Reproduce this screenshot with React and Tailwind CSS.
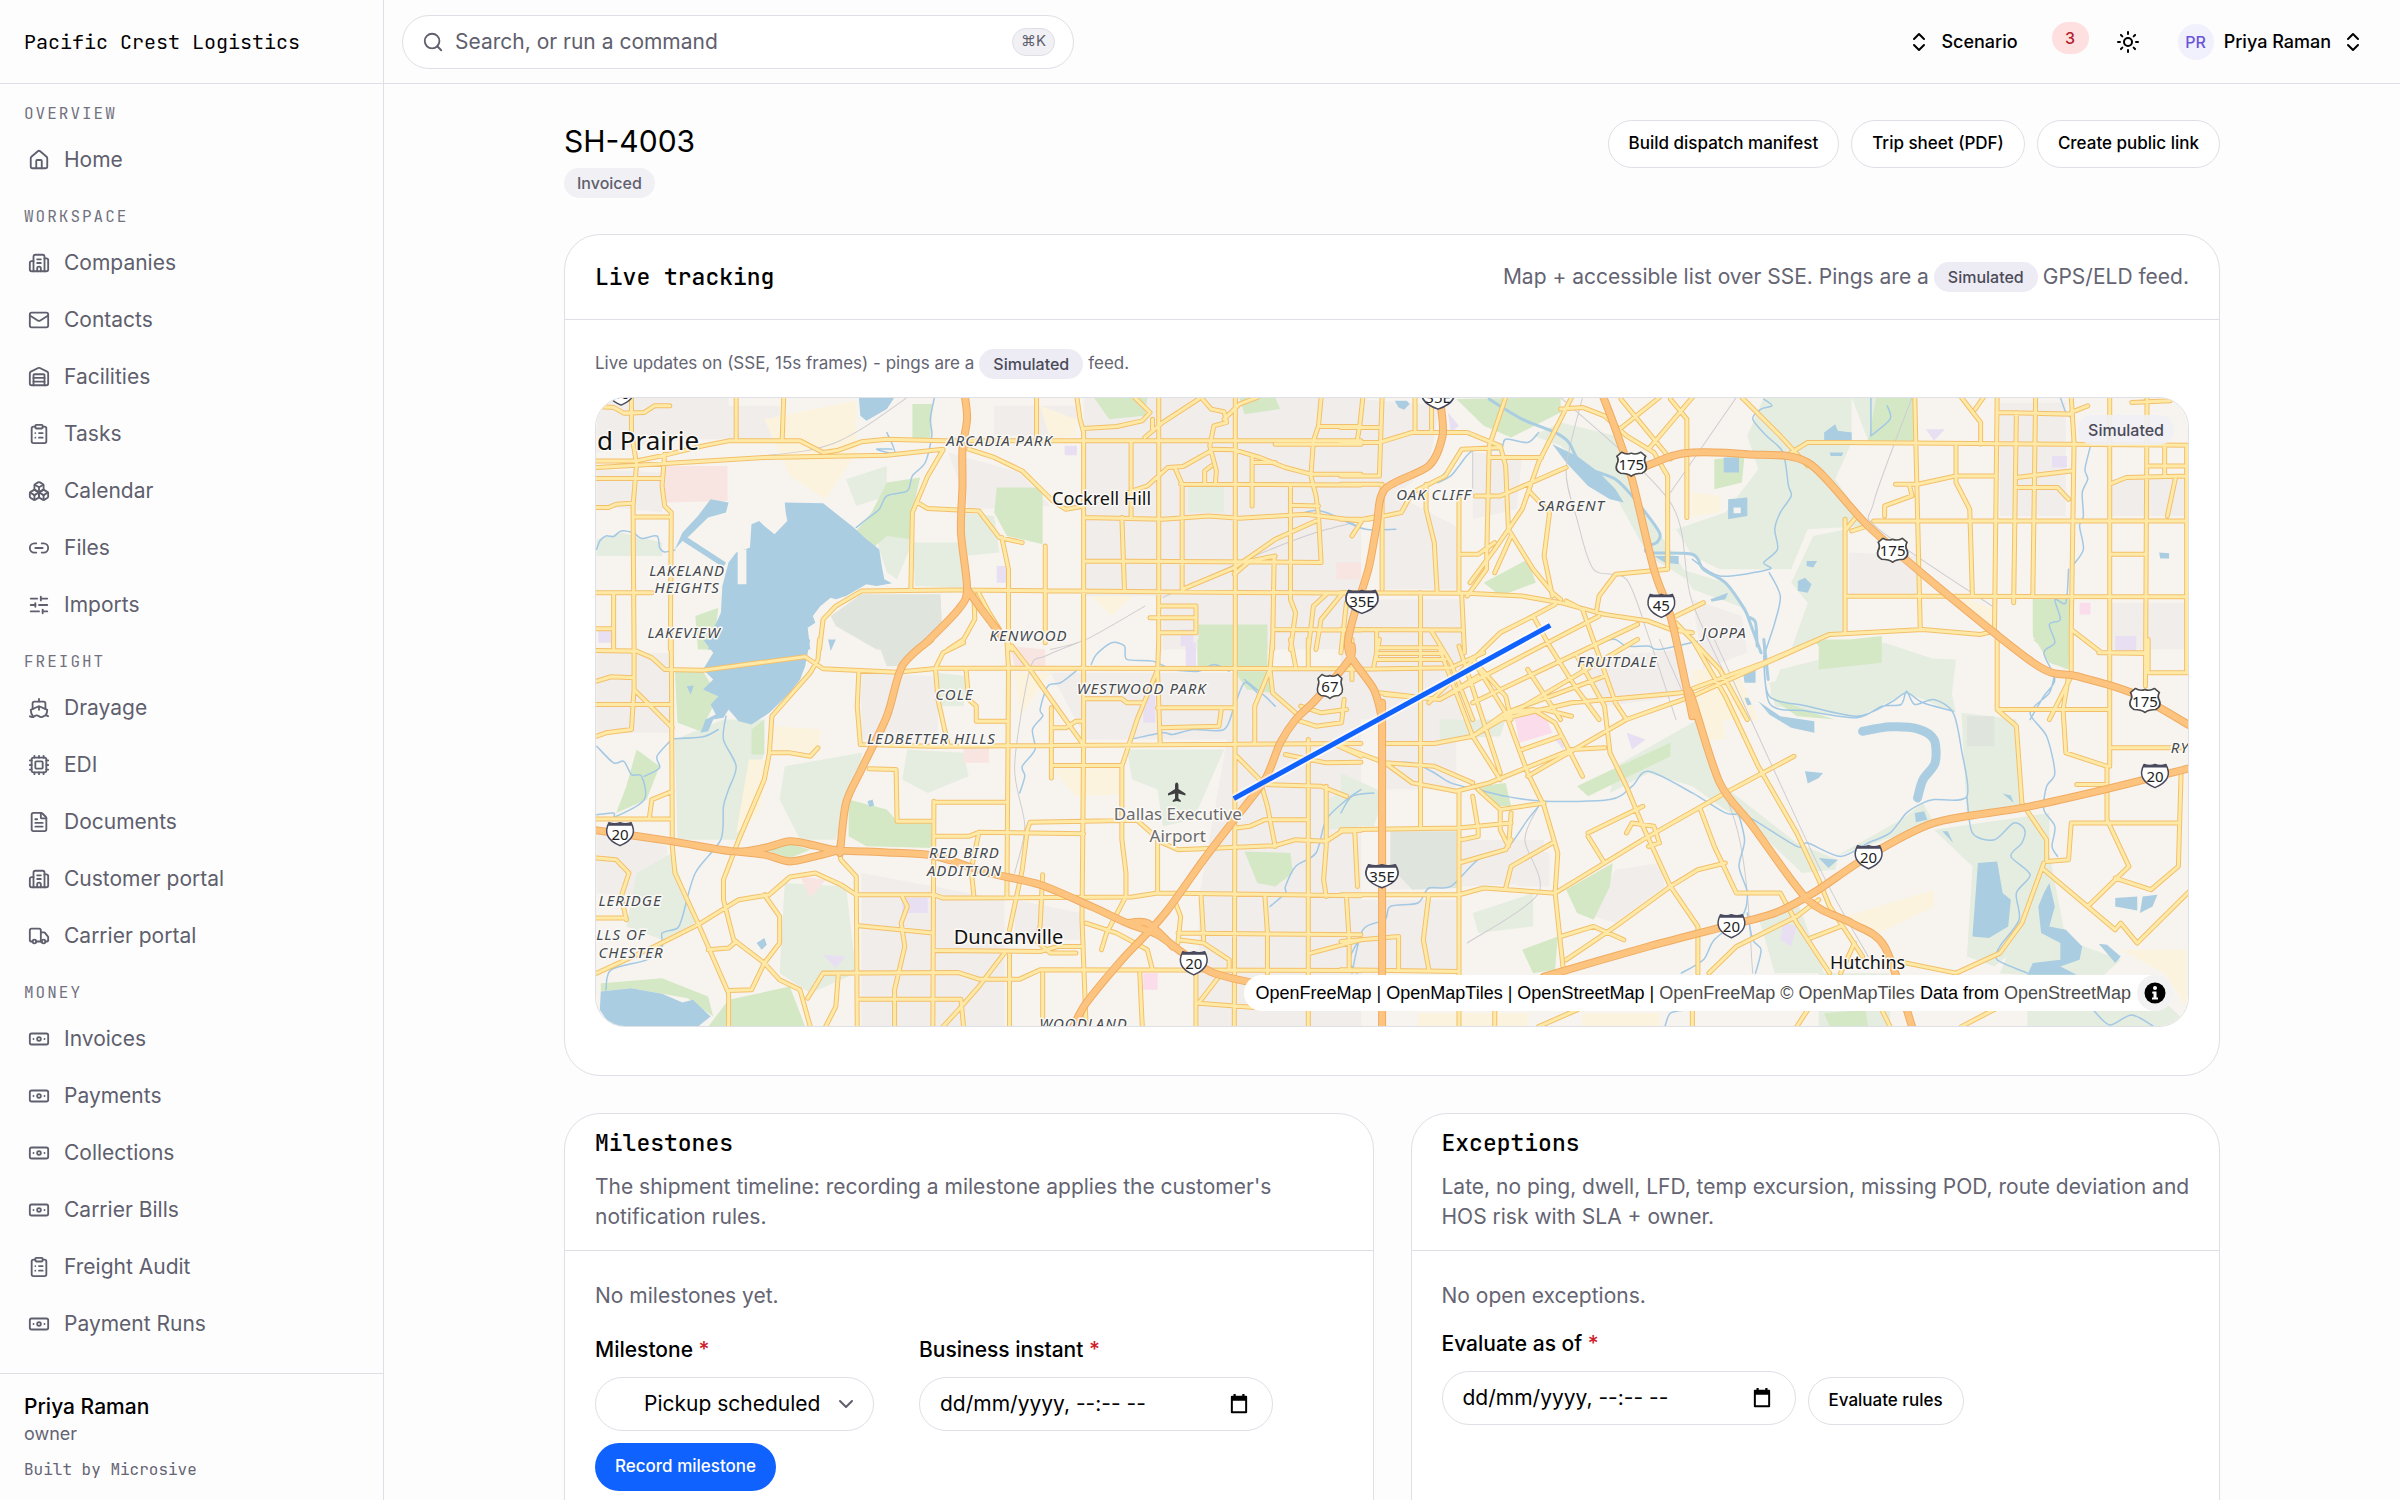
import React from "react";
import {
  House,
  Building2,
  Mail,
  Warehouse,
  ClipboardList,
  Boxes,
  Link2,
  SlidersHorizontal,
  Ship,
  Cpu,
  FileText,
  Truck,
  Banknote,
  Search,
  Sun,
  ChevronDown,
} from "lucide-react";

const NAV = [
  { title: "Overview", items: [["Home", House]] },
  {
    title: "Workspace",
    items: [
      ["Companies", Building2],
      ["Contacts", Mail],
      ["Facilities", Warehouse],
      ["Tasks", ClipboardList],
      ["Calendar", Boxes],
      ["Files", Link2],
      ["Imports", SlidersHorizontal],
    ],
  },
  {
    title: "Freight",
    items: [
      ["Drayage", Ship],
      ["EDI", Cpu],
      ["Documents", FileText],
      ["Customer portal", Building2],
      ["Carrier portal", Truck],
    ],
  },
  {
    title: "Money",
    items: [
      ["Invoices", Banknote],
      ["Payments", Banknote],
      ["Collections", Banknote],
      ["Carrier Bills", Banknote],
      ["Freight Audit", ClipboardList],
      ["Payment Runs", Banknote],
    ],
  },
];

const MONO = "font-['JetBrains_Mono','DejaVu_Sans_Mono',monospace]";

/* ---------- Map data: four tiles, each with its own grid ---------- */

const TILES = {
  nw: { ox: -36, oy: -178, sx: 0.5102, sy: 0.33333 },
  sw: { ox: -36, oy: 242, sx: 0.5102, sy: 0.33333 },
  ne: { ox: 744, oy: -28, sx: 0.54845, sy: 0.33333 },
  se: { ox: 744, oy: 242, sx: 0.54845, sy: 0.33333 },
};

const project = (tile, points) => {
  const t = TILES[tile];
  return points.split(" ").map((pair) => {
    const [x, y] = pair.split(",").map(Number);
    return [t.ox + x * t.sx, t.oy + y * t.sy];
  });
};

const at = ([x, y]) => `${x.toFixed(1)} ${y.toFixed(1)}`;

const straight = (pts) => "M" + pts.map(at).join("L");

/* Rounds every corner with a Catmull-Rom spline through the points. */
const curved = (pts) => {
  let d = "M" + at(pts[0]);
  for (let i = 0; i < pts.length - 1; i++) {
    const a = pts[i - 1] || pts[i];
    const b = pts[i];
    const c = pts[i + 1];
    const e = pts[i + 2] || c;
    d += `C${at([b[0] + (c[0] - a[0]) / 7, b[1] + (c[1] - a[1]) / 7])} ${at([c[0] - (e[0] - b[0]) / 7, c[1] - (e[1] - b[1]) / 7])} ${at(c)}`;
  }
  return d;
};

const layer = (data, draw = straight, end = "") =>
  Object.entries(data)
    .flatMap(([tile, list]) => list.map((points) => draw(project(tile, points)) + end))
    .join("");

const AREAS = [
  ["#f1edeb", {
    nw: ["72,535 330,535 330,640 72,700", "250,560 430,560 430,660 250,660", "1025,535 1568,535 1568,1290 1180,1290 1180,1130 1025,1130", "760,700 900,760 960,860 800,870", "72,750 200,760 200,880 72,860", "850,560 1010,560 1010,650 850,650"],
    sw: ["590,100 740,110 740,300 590,300", "960,100 1320,100 1320,300 1030,300", "590,700 870,780 870,1160 590,1160", "1330,90 1568,90 1568,1160 1250,1160 1250,780", "72,40 215,40 215,280 72,280", "890,780 1020,820 1020,900 890,900", "72,560 210,620 210,780 72,760"],
    ne: ["0,85 180,110 160,290 60,440 0,440", "80,360 220,480 210,660 80,660", "0,690 220,690 220,1050 0,1050", "1200,100 1320,100 1320,440 1200,440", "1400,330 1540,330 1540,440 1400,440", "925,550 1050,560 1050,680 925,680", "640,690 730,740 740,850 660,900", "240,250 330,260 320,420 240,450", "1400,700 1540,700 1540,840 1400,840"],
    se: ["80,90 210,90 210,450 80,450", "500,690 580,670 590,740 500,850 460,830", "90,600 370,600 370,730 90,750", "0,780 210,780 210,990 0,990", "430,60 620,30 620,170 480,200", "320,620 380,640 380,740 320,740"],
  }],
  ["#e5ede0", {
    nw: ["690,970 780,970 790,1105 695,1100", "560,780 640,740 640,830 580,860", "610,880 680,860 690,970 660,1080 640,1060 625,990", "1230,800 1300,800 1300,880 1230,880", "780,880 850,890 860,1000 790,1010", "72,960 120,940 200,970 200,1010 72,1010"],
    sw: ["225,300 320,240 400,240 400,340 350,600 230,600", "440,380 590,340 590,390 560,490 540,600 470,600 430,480", "440,730 560,740 580,1000 490,1060 430,1000", "680,330 790,340 800,410 720,460 670,420", "1110,330 1300,330 1240,540 1180,560 1170,450 1120,420", "150,700 220,640 265,850 200,900 130,860", "740,100 800,110 790,200 745,200", "1500,480 1568,440 1568,560 1500,570"],
    ne: ["770,85 930,85 930,220 900,330 960,470 850,480 820,600 690,600 640,560 610,480 700,430 760,300 740,200", "860,500 920,480 915,790 820,840 850,700 820,640", "800,900 990,820 1100,880 1120,1030 1030,970 940,1040 780,980", "500,200 540,400 600,540 640,640 560,560 500,380 400,230 350,200 400,160", "620,600 700,640 740,720 640,660", "1260,680 1330,680 1330,780 1260,780", "930,85 1050,85 1050,215 960,215"],
    se: ["780,130 985,50 1120,60 1110,200 1030,160 940,235 790,200", "500,380 650,240 690,430 830,610 905,660 900,690 840,700 750,560 690,500 640,440 560,400 490,460", "1130,220 1230,240 1240,500 1140,530", "1080,570 1290,520 1290,640 1250,900 1190,980 1140,950 1150,680", "240,820 350,760 350,860 250,880", "900,650 1080,550 1060,490 1020,540", "1290,640 1320,900 1420,960 1380,1020 1200,1000", "870,1000 1000,1000 1000,1160 870,1160", "1250,1010 1450,1010 1548,1160 1250,1160", "0,400 80,460 60,560 0,560", "760,830 830,780 880,1000 790,1000", "180,240 300,240 290,290 180,300"],
  }],
  ["#d5e8c6", {
    nw: ["690,555 730,555 725,655 690,660", "855,805 945,805 945,975 875,950 850,880", "640,790 705,775 690,880 685,960 640,950 610,990 580,935 610,880", "1045,535 1150,535 1145,590 1075,600", "1330,535 1400,535 1410,570 1340,585", "1250,1215 1385,1215 1385,1290 1250,1290", "265,1190 310,1165 300,1290 270,1290"],
    sw: ["225,95 280,95 310,170 275,275 230,250", "565,480 640,510 660,545 727,550 727,625 600,620 565,590", "400,630 450,612 490,630 450,655", "1340,635 1430,640 1435,700 1400,740 1365,730", "150,330 195,380 170,480 110,520 130,440", "1248,0 1385,0 1385,80 1248,80", "80,1030 200,1015 290,1070 300,1130 250,1075 140,1045 80,1055", "330,1080 450,1040 480,1160 290,1160", "375,270 400,240 400,345 375,345", "1320,95 1390,95 1390,160 1345,150"],
    ne: ["210,90 400,85 400,130 310,205 260,170", "975,85 1045,85 1050,215 960,215", "260,640 340,570 355,640 290,680", "1260,690 1330,690 1325,900 1290,880 1260,800", "870,820 985,800 985,880 870,900", "680,270 735,260 730,340 680,360"],
    se: ["480,400 600,310 600,350 450,470 430,440", "410,750 495,670 490,740 460,840 430,820", "250,440 300,430 310,500 280,500", "330,930 395,890 390,990 350,1000", "1260,0 1330,0 1320,90", "860,0 985,0 960,60 900,80", "880,1120 955,1110 960,1160 890,1160", "780,170 860,220 900,240 830,230"],
  }],
  ["#dfe4dd", {
    nw: ["590,1125 745,1125 748,1220 690,1290 620,1290 540,1220 530,1190"],
    sw: ["620,0 720,0 665,80 640,80"],
    se: ["90,575 210,575 210,745 130,750 90,680", "1140,230 1190,230 1190,320 1140,320"],
  }],
  ["#fbf3dd", {
    nw: ["400,600 580,545 580,700 520,840 450,770", "940,560 1010,600 1010,650 960,660", "1040,1130 1120,1130 1080,1190"],
    sw: ["370,360 410,360 390,520 345,580", "420,260 510,270 505,340 420,330", "965,390 1095,385 1095,465 1010,470", "890,100 960,100 900,230"],
    ne: ["1110,670 1190,720 1190,780", "640,370 690,380 690,430 640,440", "640,900 720,900 760,1050 650,1050"],
    se: ["920,830 1080,750 1080,800 980,880", "1420,930 1540,930 1540,1100 1500,1000", "140,1120 340,1120 340,1160 140,1160", "440,1120 580,1120 580,1160 440,1160", "640,180 690,170 700,300 660,300"],
  }],
  ["#f8e4e1", {
    nw: ["205,740 328,740 328,845 205,850", "1520,1030 1568,1030 1568,1080 1520,1080"],
    sw: ["470,710 520,720 490,775", "790,320 840,320 840,370 790,370", "880,20 950,30 950,80 890,80"],
  }],
  ["#e8dff3", {
    nw: ["988,680 1012,680 1012,708 988,708", "855,1040 875,1040 875,1090 855,1090", "75,1235 100,1235 100,1270 75,1270", "1215,1230 1240,1230 1240,1280 1215,1280"],
    sw: ["670,775 720,775 720,820 670,820", "1142,165 1165,165 1165,250 1142,250", "515,945 560,950 540,985", "1225,10 1245,10 1245,80 1225,80"],
    ne: ["1295,260 1322,260 1322,295 1295,295", "1410,800 1448,800 1448,845 1410,845", "1065,180 1100,180 1080,215", "195,130 215,170 200,190"],
    se: ["805,850 830,860 820,920 800,900", "520,280 555,300 530,330", "385,290 410,300 405,330"],
  }],
  ["#fadcea", {
    sw: ["1142,1000 1170,1000 1170,1050 1142,1050"],
    se: ["315,225 370,220 385,280 325,310"],
    ne: ["1345,700 1365,700 1365,735 1345,735"],
  }],
  ["#aacde1", {
    nw: [
      "440,850 515,852 575,925 600,960 625,990 630,1040 635,1080 650,1092 620,1100 600,1095 560,1130 540,1140 530,1135 510,1160 495,1190 500,1210 485,1225 490,1290 290,1290 300,1230 315,1180 318,1100 330,1030 345,1000 372,985 375,915 390,905 400,920 420,945 445,905 442,880",
      "295,840 330,850 325,880 290,895 250,955 325,1030 320,1045 240,965 225,990 240,940 270,890",
      "585,535 655,535 640,570 600,605 588,590",
    ],
    sw: [
      "280,0 490,0 480,80 470,120 450,160 410,220 375,255 350,245 330,210 320,235 300,240 290,275 275,280 285,240 305,225 295,195 310,170 280,150 300,120 280,90 300,40",
      "80,1055 140,1045 200,1062 240,1088 260,1080 295,1130 270,1160 100,1160 78,1110",
      "385,910 400,895 405,915 395,930",
      "602,485 612,480 615,498 606,502",
      "525,0 540,0 530,35",
      "248,140 262,138 256,165",
    ],
    ne: [
      "385,225 430,260 470,310 500,360 515,400 490,390 450,350 410,280",
      "880,190 900,165 905,185 930,190 930,213 880,213",
      "697,265 725,265 725,310 697,310",
      "705,390 740,385 740,440 705,450",
      "570,560 615,560 615,585 590,580",
      "832,635 845,625 857,645 850,670 832,665",
      "735,900 755,900 755,940 735,940",
      "848,575 867,575 860,595 848,590",
      "673,690 705,670 700,690 675,697",
      "1490,550 1508,552 1508,568 1492,568",
      "98,95 120,95 125,105 115,122 105,115",
      "890,250 915,250 912,260 892,260",
    ],
    se: [
      "1160,670 1195,665 1205,760 1220,780 1215,860 1180,895 1150,890",
      "1290,730 1300,800 1290,860 1320,870 1350,920 1345,960 1310,980 1340,1005 1250,1005 1260,970 1310,960 1310,910 1275,880 1270,800 1280,760",
      "760,185 800,230 862,245 862,280 820,265 780,225",
      "845,395 878,400 870,415 850,432",
      "870,655 905,660 888,685",
      "1410,775 1450,770 1450,812 1410,800",
      "1460,770 1487,765 1478,800 1455,820",
      "1380,912 1395,915 1420,950 1410,970",
      "1045,520 1062,515 1068,540 1047,548",
      "732,95 755,95 755,130 735,130",
      "1095,575 1105,575 1115,610",
      "1205,462 1220,468 1225,490",
      "735,175 742,175 748,195 740,197",
    ],
  }],
  ["#f7f4ef", { nw: ["348,995 365,990 365,1095 348,1095"], ne: ["715,415 728,415 728,432 715,432"] }],
];

const STREAMS = {
  nw: [
    "733,535 725,600 728,650 715,730 690,770 680,815 640,830 625,870 600,900 580,925",
    "72,990 78,965 90,950 105,952 120,935 145,942 160,958 190,950 195,985 205,998 225,992",
    "640,640 655,700 620,690 650,690",
    "1430,895 1470,875 1500,880 1568,925",
  ],
  sw: [
    "325,230 320,300 345,380 330,450 320,500 315,600 265,700 240,830 230,865 200,880 200,920 170,960 100,990 90,1050",
    "72,525 105,520 110,530 165,480 160,410 140,405 125,365 105,370 72,320",
    "220,298 280,292 310,270", "220,298 190,350 195,385 165,410",
    "1010,95 980,130 955,140 940,210 945,230 925,270 930,330 905,380 910,410 900,460",
    "1120,298 1180,280 1200,285 1240,270 1300,270 1320,200 1340,130 1365,160",
    "1040,75 1050,45 1080,10 1105,20 1110,60 1160,65 1200,90 1250,95 1280,75 1310,95",
    "1568,450 1540,480 1500,540 1480,640 1440,680 1420,740 1420,760 1390,800",
    "1568,890 1545,960 1560,1000", "1340,120 1380,170 1400,200",
  ],
  ne: [
    "770,90 785,110 765,120 750,150 775,200 805,250 815,350 820,380 800,430 790,480 795,540 770,580 780,600 690,620 640,570",
    "780,610 800,680 790,760 770,860",
    "1310,85 1320,130 1330,150 1335,230", "1365,230 1355,300 1360,330 1350,370 1352,440 1345,470 1352,540 1332,590",
    "1325,600 1320,700 1300,690 1310,750 1290,765 1300,820 1280,850 1300,930 1280,980 1255,1050",
    "480,815 500,810 520,830 560,830 580,840 650,815",
    "770,860 780,980 850,1010 940,1040 1000,1000 1030,970 1060,1000 1115,1025",
    "965,200 965,85", "965,200 1000,150 995,110", "360,190 340,220 300,210 290,240 240,245 215,290 200,320 175,340 190,310",
    "0,450 45,480 100,480",
  ],
  se: [
    "770,0 780,190 850,215 940,235 985,200 1020,195 1030,155 1045,195 1080,180 1115,220 1130,330 1140,470 1080,480 1060,490 1030,520 1000,580 960,610 910,650 850,610 830,620 740,530 700,520 640,460 560,395 530,440 490,480 370,485 300,470 250,450 200,430 165,395 130,370 90,370",
    "1140,470 1150,580 1190,600 1225,550 1245,570 1240,610 1220,650 1255,705 1230,760 1235,840 1200,920 1195,960 1250,1000",
    "1300,100 1290,160 1255,220 1285,290 1300,400 1285,440 1280,510 1300,560 1295,620 1305,650",
    "0,520 20,470 60,460", "360,500 340,540 300,630 250,660 200,740 160,745 140,790 90,800 80,840 40,870 20,1000",
    "720,500 735,600 725,680 740,760 730,830 680,900 660,960 620,1000", "740,820 750,900 765,930 755,1000",
    "590,1160 600,1120 630,1110", "1370,1110 1400,1155 1440,1125 1480,1160",
  ],
};

const RIVERS = {
  ne: ["270,90 330,150 390,190 415,220 440,290 500,330 540,400 580,490 575,520 560,530 560,550 640,555 660,600 700,640 735,720 745,760 765,850", "745,745 755,760 758,830"],
  se: ["770,0 778,120"],
};
const OXBOW = { se: ["950,275 1000,262 1050,268 1080,300 1082,370 1060,420 1050,475"] };

const RAIL = {
  nw: ["680,535 600,620 540,670 480,695 400,710", "1568,905 1480,940 1360,1010 1180,1135", "1145,1160 1030,1260 960,1290"],
  sw: ["1030,0 950,50 920,90 890,380 910,560 890,700"],
  ne: ["440,85 410,300 430,450 460,600 520,630 560,800 610,1050", "720,85 600,370", "400,85 600,400 640,700 740,1050", "1040,85 970,400 980,480 1190,715", "240,250 240,370"],
  se: ["580,0 720,560 750,1000", "680,0 870,680 960,950", "360,500 335,600 360,760 230,910"],
};

const ROADS = {
  nw: [
    "72,725 150,725 205,708 280,680 330,665 470,665 515,700 545,693 590,668 640,660 750,665 1022,665 1568,665",
    "72,745 150,738 400,715 640,708 750,690",
    "800,690 850,715 905,755 935,800 965,845 990,870 1022,862",
    "140,535 140,640 150,735 143,860 145,1290",
    "72,562 105,565 125,582 165,580 185,560 215,560",
    "345,535 345,662", "438,535 435,665", "72,778 200,778",
    "205,705 200,800 205,860 218,880 216,1290",
    "143,893 216,893", "72,865 95,865 110,855 140,852", "72,1120 180,1120", "105,1125 105,1290", "72,1228 105,1228",
    "933,535 933,650", "1012,535 1018,600 1025,640 1025,1290",
    "1025,628 1090,622 1140,605 1155,580 1125,535", "1160,600 1160,630", "1172,535 1172,1290",
    "1145,655 1180,610 1250,540",
    "1255,535 1275,570 1300,578 1305,610 1280,620 1272,680 1285,755 1283,790", "1262,790 1262,755 1275,740",
    "1322,535 1322,1290", "1300,600 1330,555 1365,535",
    "1490,535 1485,620 1475,665 1470,770 1480,830 1485,890 1490,1030",
    "1400,675 1568,675", "1485,622 1568,622",
    "1110,820 1150,800 1190,745 1220,742 1280,690 1320,692 1370,715 1420,745 1470,765 1568,765",
    "1355,710 1355,860", "1358,730 1400,730", "1205,750 1218,795 1218,1110", "1215,795 1568,797",
    "1430,797 1430,1140 1440,1180 1430,1290", "1430,858 1485,860",
    "1025,895 1180,900 1270,890 1330,897 1460,885 1568,905",
    "1118,665 1118,895", "1100,895 1105,1110", "1025,1025 1380,1028 1490,1030",
    "1320,1065 1350,1025 1400,1010", "1398,1015 1395,1290",
    "590,1115 770,1112 1568,1122", "590,1115 540,1160 515,1200 508,1290",
    "750,692 720,770 690,880 687,1112", "700,850 720,868 820,875 860,955 905,970",
    "865,955 878,1050 878,1290", "950,980 950,1270", "810,1122 812,1200 790,1260 760,1290",
    "1175,1160 1245,1160 1245,1240 1175,1240", "1155,1195 1245,1195", "1400,1230 1568,1232",
    "1500,1125 1475,1160 1465,1290", "1218,1110 1320,1045 1400,960 1480,905", "1530,1125 1490,1200 1480,1290",
    "820,1122 840,1180 885,1290",
  ],
  sw: [
    "72,33 150,35 180,55 205,90 280,92 480,52 515,88 660,98 740,86 1568,88",
    "218,0 220,620 225,700 270,850 330,1060 330,1160", "145,0 145,150 220,265",
    "72,195 218,195", "72,290 90,280 140,270 145,150", "72,125 100,112 145,115",
    "508,0 505,60 490,100 415,230 410,340 400,420 350,600 320,720 320,780 340,900 400,970 430,1020 470,1050 490,1160",
    "415,340 450,340 490,350 505,325", "72,538 220,538", "175,535 180,480 220,455",
    "585,98 582,200 588,315 730,320 1568,312", "735,86 740,180 760,318", "735,86 750,40 790,10",
    "795,90 800,180 815,200 815,245 875,245", "875,0 878,90 875,770", "885,20 920,90 980,220 1022,310",
    "1025,0 1025,310 1022,840 1030,1160", "605,388 658,390 660,545 730,545",
    "732,485 730,1160", "732,488 875,488", "732,590 800,590 820,578 1025,582",
    "915,570 920,548 1130,542 1180,610 1210,630 1400,618 1440,600 1500,605 1530,575 1568,572",
    "915,570 905,690 880,870", "820,578 805,690 810,765",
    "585,765 732,765 750,775 1120,772 1170,760 1568,768", "545,620 550,660 580,710 582,1160",
    "185,920 270,855 350,780 410,765 450,712 500,700 550,735 580,765",
    "400,765 430,830 430,910 400,970 375,1050 330,1052", "72,655 110,660 135,700 120,770 130,840", "72,1000 185,920",
    "72,835 130,835", "290,930 330,925 345,905",
    "485,1075 515,1000 780,998 820,1018 900,1018 940,990 1568,992", "585,1078 785,1078", "585,858 730,880",
    "735,932 940,935 975,920 1022,920", "870,940 820,1040 780,1110 750,1160", "880,945 880,1160",
    "670,770 680,800 668,850 675,920 655,1050 655,1160", "945,705 940,860 930,900 960,940 1010,940",
    "962,205 962,415", "962,265 990,265 1010,245 1022,245", "962,378 1100,378", "1030,178 1100,178 1110,190 1140,190",
    "1170,90 1130,240 1100,380 1100,600 1108,700 1108,770 1070,880 1060,930", "1172,0 1170,100 1175,310",
    "1170,205 1320,205", "1295,205 1290,260 1175,265", "1322,0 1320,1160",
    "1395,0 1390,90 1395,160 1440,220", "1360,310 1360,200 1390,90", "1170,600 1170,760",
    "1465,0 1465,88", "1465,300 1465,1160", "1500,440 1500,620 1495,720 1500,770", "1210,880 1568,885",
    "1205,790 1215,830 1210,910", "1385,880 1385,1000", "1255,768 1260,900", "1420,345 1500,370 1568,368",
    "1385,435 1490,440 1540,470", "1325,565 1350,560 1380,540 1465,540", "1245,1000 1245,1160",
    "1290,1010 1250,1090 1380,1105", "1135,1000 1140,1160", "945,1000 945,1160", "1430,0 1440,80",
    "1030,850 1090,880 1150,930 1160,990", "1210,900 1260,910 1310,960 1310,985", "1325,350 1370,420 1385,500 1400,620",
    "1440,240 1480,260 1530,250 1535,180", "1450,200 1490,220 1540,210", "785,1078 790,1160", "545,1000 540,1100 520,1160",
    "1470,940 1568,900", "1380,770 1385,880", "1510,310 1568,350",
  ],
  ne: [
    "0,175 70,175", "0,220 70,220 130,190 230,190 290,230 300,290", "0,320 70,320", "0,345 70,345",
    "40,85 35,160 30,210", "75,85 70,320", "135,85 135,190", "165,85 165,190",
    "300,85 270,230 265,600 230,680", "420,85 400,150 360,280 330,420 280,540 235,640", "270,265 365,265",
    "0,450 50,450 110,430 130,370 190,320 220,240 290,235", "245,380 290,380 410,295",
    "155,345 155,420 170,520 175,665", "215,385 215,670", "75,345 75,660",
    "300,290 305,480 350,600 385,670 400,690", "345,370 380,430 370,560 385,680",
    "0,670 230,672 330,680 400,700 480,735 560,755 600,780 640,790", "220,555 250,555 280,520", "280,610 310,500",
    "0,780 220,782", "160,1000 290,790 350,740 390,705", "65,785 65,870 190,870", "70,835 180,835", "70,852 185,852",
    "165,785 200,880 240,1050", "220,680 225,850", "0,900 200,895 260,850", "145,670 145,1050", "10,700 0,850",
    "400,120 440,115 480,140 520,200 570,250 595,320 595,600 500,615 470,680 465,730",
    "500,190 580,85", "510,90 570,210 600,270", "560,240 640,85", "630,150 630,445", "600,90 630,150",
    "730,85 800,200 850,290", "820,250 850,220 920,220 1548,228", "20,500 40,450 70,440",
    "410,695 440,720 470,860 500,1000 520,1050", "610,740 660,700", "610,760 690,900 740,1050",
    "350,740 380,830 430,960 470,1050", "240,1000 540,765", "190,980 470,740", "70,970 180,990 250,920",
    "290,1050 420,1000 620,970 770,880 890,795 1060,780 1165,795 1190,785", "240,870 300,980 310,1050",
    "1045,85 1055,780", "1130,85 1165,160 1165,225", "1155,120 1170,85", "1195,85 1190,790", "1230,130 1225,700", "1265,85 1260,680",
    "1330,85 1335,220 1330,780 1385,850 1465,852", "1400,85 1400,1050", "1468,85 1465,950",
    "1540,230 1540,910", "1465,910 1545,910", "1195,130 1330,135", "1440,100 1510,95", "1330,130 1360,110",
    "1010,345 1050,345 1120,320 1190,320", "990,440 990,410 1040,380 1035,345", "1120,230 1120,340 1145,420 1150,680",
    "970,455 1545,455", "920,480 940,440", "930,485 960,470", "918,680 1545,682", "918,450 918,790",
    "1230,325 1330,305", "1230,355 1305,355 1325,390", "1400,345 1430,325 1545,320", "1400,555 1465,555",
    "1520,325 1505,440", "1330,780 1330,920 1290,1050", "1470,290 1540,290", "1195,790 1195,1020 1400,1020",
    "1500,228 1500,320", "310,1030 370,1020 420,1040", "340,900 400,1050",
  ],
  se: [
    "0,90 200,85 260,40", "145,0 145,560", "80,312 170,312 240,290 300,220 350,210 390,250 440,410",
    "180,30 240,290 290,420", "215,20 290,400", "240,60 300,220 340,400 370,500 395,640 390,760 405,990",
    "430,50 480,200 490,340 520,440 550,560 600,740 650,860 650,1000", "240,290 540,0",
    "80,370 130,430 210,455 270,430 420,330 480,325", "0,320 80,370 170,380 240,430", "80,165 180,180 330,50",
    "300,220 480,110", "340,410 520,240 640,170 870,0", "330,330 400,290", "215,455 215,1000",
    "0,570 215,565 310,550", "0,765 215,765 260,745 385,760", "240,470 250,570 250,590 220,600",
    "250,450 290,510 370,490", "290,510 290,570 305,620 310,520", "215,670 300,630 310,600",
    "300,745 310,680 385,610", "390,760 550,600 700,460 825,350", "450,580 550,500", "450,590 480,670",
    "520,580 530,550 570,560 580,610 560,620", "640,0 700,170 760,380 830,580 870,720 890,800 950,950",
    "400,890 460,860 515,900", "410,960 500,860 600,740 650,690 700,670", "655,510 680,620 720,760 800,760 830,850 890,1000",
    "670,1000 720,920 830,830 870,780", "855,895 910,860", "910,1000 935,910",
    "1000,965 1030,970 1120,1000 1200,940 1240,850 1280,670",
    "1195,0 1195,210 1230,260 1240,490 1285,600 1285,660", "1195,210 1400,210",
    "1325,110 1315,210 1320,340 1395,380 1395,540 1435,680 1360,800", "1400,0 1400,380", "1470,0 1470,100 1548,100",
    "1400,325 1530,325", "1340,435 1395,435", "1530,400 1525,680 1475,750 1410,715",
    "1285,665 1325,660 1330,550 1525,550", "1280,690 1410,870 1420,850 1450,910 1548,750", "1380,40 1465,40",
    "25,570 30,740", "160,765 150,900 160,990", "0,990 215,995", "0,905 105,890 105,990", "10,770 15,900 15,990",
    "215,1000 215,1160", "360,1160 430,1110", "1130,1160 1200,1100", "640,1100 640,1160", "830,1160 850,1110",
    "985,1110 1000,1160", "280,1110 280,1160", "20,0 20,120", "70,0 60,80",
  ],
};

const HIGHWAYS = {
  nw: [
    "793,535 797,600 788,690 788,800 785,940 797,1110 780,1170 720,1265 700,1290", "797,1110 830,1180 865,1250",
  ],
  sw: [
    "725,0 670,80 640,230 590,390 560,490 548,640",
    "72,572 220,605 340,635 400,625 450,605 500,618 545,632 640,638 720,645 760,660 840,700 940,735 1040,800 1110,850 1170,885 1220,940 1280,1000 1390,1040",
    "340,635 400,645 450,665 500,650 545,632",
    "1550,20 1545,60 1480,180 1440,240 1410,310 1380,420 1320,540 1260,660 1190,810 1150,880 1100,960 1030,1090 1005,1160",
    "1110,850 1150,850 1200,920",
  ],
  ne: [
    "182,110 185,200 160,290 80,360 65,470 50,600 20,760 15,850 60,960 75,1050",
    "478,85 500,180 530,330 570,600 600,740 630,960 640,1040",
    "550,295 600,262 640,250 740,255 850,280 960,470 1100,670 1270,890 1340,920 1440,970 1548,1070",
  ],
  se: [
    "75,190 75,1160", "630,150 640,180 690,430 750,560 850,780 930,850 990,920 1040,1160",
    "370,1010 560,920 700,860 790,820 860,760 960,650 1080,550 1240,505 1390,450 1548,385",
  ],
};

const DISTRICTS = [
  [403, 49, "ARCADIA PARK"], [837, 103, "OAK CLIFF"], [974, 114, "SARGENT"], [91, 179, "LAKELAND"], [91, 196, "HEIGHTS"],
  [88, 241, "LAKEVIEW"], [432, 244, "KENWOOD"], [545, 297, "WESTWOOD PARK"], [358, 303, "COLE"], [335, 346, "LEDBETTER HILLS"],
  [1127, 241, "JOPPA"], [1020, 270, "FRUITDALE"], [368, 460, "RED BIRD"], [368, 478, "ADDITION"], [487, 631, "WOODLAND"],
  [34, 508, "LERIDGE"], [25, 542, "LLS OF"], [35, 560, "CHESTER"], [1582, 355, "RY"],
];

const SHIELDS = [
  ["i", 765, 204, "35E"], ["u", 733, 289, "67"], ["u", 1034, 67, "175"], ["u", 1295, 153, "175"], ["u", 1547, 303, "175"],
  ["i", 1064, 208, "45"], ["i", 24, 436, "20"], ["i", 597, 565, "20"], ["i", 785, 478, "35E"], ["i", 1271, 459, "20"],
  ["i", 1134, 528, "20"], ["i", 1557, 378, "20"], ["i", 841, 0, "35E"], ["i", 25, -4, "30"],
];

const ROAD_PATH = layer(ROADS);
const HIGHWAY_PATH = layer(HIGHWAYS, curved);

function Shield({ kind, x, y, label }) {
  const stretch = label.length > 2 ? 1.2 : 1;
  return (
    <g transform={`translate(${x} ${y})`}>
      <g transform={`scale(${stretch} 1)`}>
        {kind === "i" ? (
          <>
            <path d="M-11-11Q-5-9 0-11Q5-9 11-11Q19 4 0 12Q-19 4-11-11Z" fill="#fff" stroke="#4a4a5e" strokeWidth="1.500" strokeLinejoin="round" />
            <path d="M-11-11Q-5-9 0-11Q5-9 11-11L12-8H-12Z" fill="#4a4a5e" />
          </>
        ) : (
          <path
            d="M-8-12Q-4-9 0-11Q4-9 8-12L12-8Q10-4 12 0Q14 6 9 9Q3 9 0 12Q-3 9-9 9Q-14 6-12 0Q-10-4-12-8Z"
            fill="#fff"
            stroke="#4a4a4a"
            strokeWidth="1.500"
            strokeLinejoin="round"
          />
        )}
      </g>
      <text y="6" textAnchor="middle" fontSize="15" fill="#222">
        {label}
      </text>
    </g>
  );
}

function TrackingMap() {
  return (
    <svg
      viewBox="0 0 1590 629"
      preserveAspectRatio="xMidYMid slice"
      className="block h-full w-full font-['Noto_Sans',sans-serif]"
      role="img"
      aria-label="Map of the shipment route south of Dallas"
    >
      <rect width="1600" height="629" fill="#f7f4ef" />
      {AREAS.map(([fill, data]) => (
        <path key={fill} d={layer(data, straight, "Z")} fill={fill} />
      ))}
      <g fill="none" strokeLinejoin="round" strokeLinecap="round">
        <path d={layer(RAIL, curved)} stroke="#cfccd0" strokeWidth="1" />
        <path d={layer(STREAMS, curved)} stroke="#a3c8e4" strokeWidth="1.500" />
        <path d={layer(RIVERS, curved)} stroke="#aacde1" strokeWidth="3" />
        <path d={layer(OXBOW, curved)} stroke="#aacde1" strokeWidth="9" />
        <path d={ROAD_PATH} stroke="#f2c06c" strokeWidth="5" />
        <path d={ROAD_PATH} stroke="#ffe9a6" strokeWidth="3" />
        <path d={HIGHWAY_PATH} stroke="#f0ab62" strokeWidth="8" />
        <path d={HIGHWAY_PATH} stroke="#fcc47f" strokeWidth="6" />
      </g>
      <path d="M637 401L953 228" stroke="#fff" strokeOpacity="0.600" strokeWidth="9" />
      <path d="M637 401L953 228" stroke="#0f62fe" strokeWidth="5" />
      {SHIELDS.map(([kind, x, y, label]) => (
        <Shield key={`${x}-${y}`} kind={kind} x={x} y={y} label={label} />
      ))}
      <path
        d="M580 385c1 0 1.700 1 1.700 3v3.500l7 4.500v2l-7-2v5l2.300 2v1.500l-4-1l-4 1v-1.500l2.300-2v-5l-7 2v-2l7-4.500v-3.500c0-2 0.700-3 1.700-3Z"
        fill="#3f3f3f"
      />
      <g stroke="#fbf9f6" strokeWidth="3" strokeLinejoin="round" paintOrder="stroke">
        <g fontSize="15" fontStyle="italic" fill="#454a50" textAnchor="middle" className="tracking-[1px]">
          {DISTRICTS.map(([x, y, name]) => (
            <text key={name} x={x} y={y}>
              {name}
            </text>
          ))}
        </g>
        <g fontSize="17" fill="#6b6b6b" textAnchor="middle">
          <text x="581" y="422">Dallas Executive</text>
          <text x="581" y="444">Airport</text>
        </g>
        <g fill="#111" textAnchor="middle">
          <text x="505" y="108" fontSize="18">Cockrell Hill</text>
          <text x="412" y="546" fontSize="20">Duncanville</text>
          <text x="1270" y="571" fontSize="18">Hutchins</text>
          <text x="1" y="53" fontSize="26" textAnchor="start">d Prairie</text>
        </g>
      </g>
    </svg>
  );
}

/* ---------- Small parts ---------- */

function UpDown() {
  return (
    <svg viewBox="0 0 24 24" className="size-6 shrink-0" fill="none" stroke="currentColor" strokeWidth="2" strokeLinecap="round" strokeLinejoin="round" aria-hidden="true">
      <path d="M7 9l5-5l5 5M7 15l5 5l5-5" />
    </svg>
  );
}

function Simulated() {
  return (
    <span className="inline-flex h-[30px] items-center rounded-full bg-[#edecf4] px-[14px] text-[16px] font-medium text-[#4a4a58]">
      Simulated
    </span>
  );
}

function OutlineButton({ children }) {
  return (
    <button type="button" className="h-12 whitespace-nowrap rounded-full border border-[#dfdfe6] bg-white px-5 text-[17px] font-medium text-black">
      {children}
    </button>
  );
}

function Required() {
  return <span className="text-[#d0202a]">*</span>;
}

function DateField({ id }) {
  return (
    <div className="flex h-[54px] w-[354px] items-center rounded-full border border-[#dfdfe6] bg-white pl-5 pr-[22px]">
      <input id={id} type="text" placeholder="dd/mm/yyyy, --:-- --" className="min-w-0 flex-1 bg-transparent text-[21px] text-black outline-none placeholder:text-black" />
      <button type="button" aria-label="Open calendar" className="shrink-0">
        <svg viewBox="0 0 20 20" className="size-[22px]" aria-hidden="true">
          <path d="M3.500 3.500h13v14h-13Z" fill="none" stroke="#000" strokeWidth="1.800" strokeLinejoin="round" />
          <path d="M3 3h14v4h-14ZM5 1h2v3h-2ZM13 1h2v3h-2Z" fill="#000" />
        </svg>
      </button>
    </div>
  );
}

function CardHeader({ title, children }) {
  return (
    <div className="border-b border-[#dfdfe6] pb-[18px] pl-[30px] pr-5 pt-[14px]">
      <h2 className={`text-[23px] font-medium leading-[30px] text-black ${MONO}`}>{title}</h2>
      <p className="mt-[14px] text-[21px] leading-[30px] text-[#646472]">{children}</p>
    </div>
  );
}

function Sidebar() {
  return (
    <aside className="flex w-96 shrink-0 flex-col border-r border-[#dfdfe6]">
      <div className={`flex h-[84px] shrink-0 items-center border-b border-[#dfdfe6] px-6 text-[20px] text-black ${MONO}`}>
        Pacific Crest Logistics
      </div>
      <nav aria-label="Main" className="flex min-h-0 flex-1 flex-col gap-[18px] overflow-hidden px-3 pt-[18px]">
        {NAV.map((section) => (
          <div key={section.title}>
            <h3 className={`mb-[7px] px-3 text-[16px] uppercase leading-6 tracking-[2px] text-[#71717f] ${MONO}`}>{section.title}</h3>
            <ul className="flex flex-col gap-[3px]">
              {section.items.map(([label, Icon]) => (
                <li key={label}>
                  <a href="#" className="flex h-[54px] items-center gap-[13px] rounded-full px-[15px] text-[21px] text-[#5f5f6d]">
                    <Icon className="size-6 shrink-0 p-px" strokeWidth={2} aria-hidden="true" />
                    {label}
                  </a>
                </li>
              ))}
            </ul>
          </div>
        ))}
      </nav>
      <div className="shrink-0 border-t border-[#dfdfe6] px-6 py-[18px]">
        <p className="text-[21px] font-medium leading-[30px] text-black">Priya Raman</p>
        <p className="text-[18px] leading-6 text-[#646472]">owner</p>
        <p className={`mt-3 text-[16px] leading-6 text-[#646472] ${MONO}`}>Built by Microsive</p>
      </div>
    </aside>
  );
}

function TopBar() {
  return (
    <header className="flex h-[84px] shrink-0 items-center justify-between border-b border-[#dfdfe6] pl-[18px] pr-[35px]">
      <label className="flex h-[54px] w-[672px] items-center rounded-full border border-[#dfdfe6] bg-white px-[18px]">
        <Search className="size-6 shrink-0 p-px text-[#5f5f6d]" strokeWidth={2} aria-hidden="true" />
        <input type="search" aria-label="Search" placeholder="Search, or run a command" className="ml-[10px] min-w-0 flex-1 bg-transparent text-[21px] outline-none placeholder:text-[#5f5f6d]" />
        <kbd className="flex h-[28px] items-center rounded-full border border-[#dfdfe6] bg-[#f0f0f5] px-2 font-[Inter,'DejaVu_Sans',sans-serif] text-[15px] text-[#5f5f6d]">
          ⌘K
        </kbd>
      </label>
      <div className="flex items-center text-[18px] font-medium text-black">
        <button type="button" className="flex items-center gap-[10px]">
          <UpDown />
          Scenario
        </button>
        <button type="button" aria-label="Notifications" className="mb-2 ml-[34px] flex h-8 w-[37px] items-center justify-center rounded-full bg-[#fde0df] text-[16px] text-[#b3202c]">
          3
        </button>
        <button type="button" aria-label="Toggle theme" className="ml-[27px]">
          <Sun className="size-6" strokeWidth={2} aria-hidden="true" />
        </button>
        <button type="button" className="ml-[38px] flex items-center gap-[10px]">
          <span className="flex size-9 items-center justify-center rounded-full bg-[#f1f0fd] text-[16px] text-[#6a55d8]">PR</span>
          Priya Raman
          <UpDown />
        </button>
      </div>
    </header>
  );
}

export default function App() {
  return (
    <div className="flex h-screen overflow-hidden bg-[#fdfdfe] font-[Inter,sans-serif]">
      <Sidebar />
      <div className="flex min-w-0 flex-1 flex-col">
        <TopBar />
        <main className="min-h-0 flex-1 overflow-hidden px-9 pt-9">
          <div className="mx-auto flex w-full max-w-[1656px] flex-col">
            <div className="flex items-start justify-between">
              <div>
                <h1 className="text-[30px] leading-[42px] text-black">SH-4003</h1>
                <span className="mt-[6px] flex h-[30px] w-fit items-center rounded-full bg-[#f0f0f5] px-[13px] text-[16px] font-medium text-[#5f5f6d]">
                  Invoiced
                </span>
              </div>
              <div className="flex gap-3">
                <OutlineButton>Build dispatch manifest</OutlineButton>
                <OutlineButton>Trip sheet (PDF)</OutlineButton>
                <OutlineButton>Create public link</OutlineButton>
              </div>
            </div>

            <section className="mt-9 rounded-[36px] border border-[#dfdfe6] bg-white">
              <div className="flex h-[85px] items-center justify-between border-b border-[#dfdfe6] px-[30px]">
                <h2 className={`text-[23px] font-medium leading-[30px] text-black ${MONO}`}>Live tracking</h2>
                <p className="flex items-center gap-[5px] text-[21px] text-[#646472]">
                  Map + accessible list over SSE. Pings are a <Simulated /> GPS/ELD feed.
                </p>
              </div>
              <div className="px-[30px] pb-12 pt-[29px]">
                <p className="flex h-[30px] items-center gap-[5px] text-[17px] text-[#646472]">
                  Live updates on (SSE, 15s frames) - pings are a <Simulated /> feed.
                </p>
                <div className="relative mt-[18px] h-[630px] overflow-hidden rounded-[30px] border border-[#dfdfe6]">
                  <TrackingMap />
                  <span className="absolute right-[14px] top-[17px] flex h-[30px] items-center rounded-full bg-[#f0eff5]/90 px-[10px] text-[16px] font-medium text-[#4a4a58]">
                    Simulated
                  </span>
                  <div className="absolute bottom-[15px] right-[15px] flex h-9 items-center rounded-full bg-white pl-3 font-['Liberation_Sans',Arial,sans-serif] text-[18px] text-black">
                    <p>
                      <a href="#">OpenFreeMap</a> | <a href="#">OpenMapTiles</a> | <a href="#">OpenStreetMap</a> |{" "}
                      <a href="#" className="text-[#4d4d4d]">OpenFreeMap</a>{" "}
                      <a href="#" className="text-[#4d4d4d]">© OpenMapTiles</a> Data from{" "}
                      <a href="#" className="text-[#4d4d4d]">OpenStreetMap</a>
                    </p>
                    <button type="button" aria-label="Toggle attribution" className="ml-[6px] flex size-9 items-center justify-center rounded-full bg-[#f2f2f2]">
                      <svg viewBox="0 0 24 24" className="size-6" aria-hidden="true">
                        <circle cx="12" cy="12" r="10.500" fill="#000" />
                        <circle cx="12" cy="7" r="2" fill="#fff" />
                        <path d="M9.500 10.500h4v6h1.500v2h-6v-2h1.500v-4h-1.500Z" fill="#fff" />
                      </svg>
                    </button>
                  </div>
                </div>
              </div>
            </section>

            <div className="mt-[37px] grid grid-cols-2 gap-[37px]">
              <section className="h-[480px] rounded-[36px] border border-[#dfdfe6] bg-white">
                <CardHeader title="Milestones">
                  The shipment timeline: recording a milestone applies the customer's notification rules.
                </CardHeader>
                <div className="px-[30px] pt-[30px]">
                  <p className="text-[21px] leading-[30px] text-[#646472]">No milestones yet.</p>
                  <form className="mt-6" onSubmit={(e) => e.preventDefault()}>
                    <div className="flex gap-[45px]">
                      <div className="flex flex-col gap-3">
                        <label htmlFor="milestone" className="text-[21px] font-medium leading-[30px] text-black">
                          Milestone <Required />
                        </label>
                        <div className="relative">
                          <select id="milestone" className="h-[54px] w-[279px] appearance-none rounded-full border border-[#dfdfe6] bg-white pl-12 pr-12 text-[21px] text-black">
                            <option>Pickup scheduled</option>
                          </select>
                          <ChevronDown className="pointer-events-none absolute right-4 top-[15px] size-6 text-[#5f5f6d]" strokeWidth={2} aria-hidden="true" />
                        </div>
                      </div>
                      <div className="flex flex-col gap-3">
                        <label htmlFor="instant" className="text-[21px] font-medium leading-[30px] text-black">
                          Business instant <Required />
                        </label>
                        <DateField id="instant" />
                      </div>
                    </div>
                    <button type="submit" className="mt-3 h-12 rounded-full bg-[#0f62fe] px-5 text-[17px] font-medium text-white">
                      Record milestone
                    </button>
                  </form>
                </div>
              </section>

              <section className="h-[480px] rounded-[36px] border border-[#dfdfe6] bg-white">
                <CardHeader title="Exceptions">
                  Late, no ping, dwell, LFD, temp excursion, missing POD, route deviation and HOS risk with SLA + owner.
                </CardHeader>
                <div className="px-[30px] pt-[30px]">
                  <p className="text-[21px] leading-[30px] text-[#646472]">No open exceptions.</p>
                  <form className="mt-[18px] flex items-end gap-3" onSubmit={(e) => e.preventDefault()}>
                    <div className="flex flex-col gap-3">
                      <label htmlFor="asof" className="text-[21px] font-medium leading-[30px] text-black">
                        Evaluate as of <Required />
                      </label>
                      <DateField id="asof" />
                    </div>
                    <OutlineButton>Evaluate rules</OutlineButton>
                  </form>
                </div>
              </section>
            </div>
          </div>
        </main>
      </div>
    </div>
  );
}
